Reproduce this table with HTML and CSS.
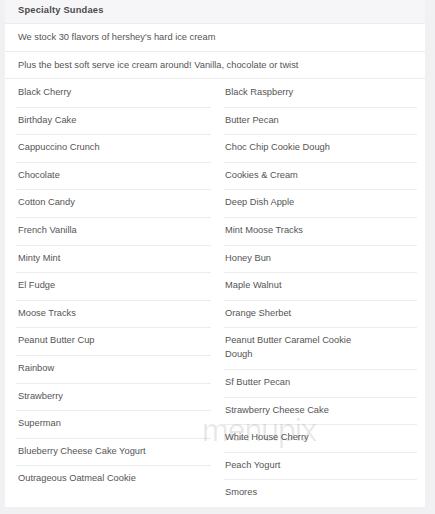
FILE: index.html
```html
<!DOCTYPE html>
<html>
<head>
<meta charset="utf-8">
<link rel="stylesheet" href="styles.css">
</head>
<body>
<div class="card">
  <div class="header">Specialty Sundaes</div>
  <div class="note">We stock 30 flavors of hershey's hard ice cream</div>
  <div class="note">Plus the best soft serve ice cream around! Vanilla, chocolate or twist</div>
  <div class="cols">
    <ul class="col">
      <li>Black Cherry</li>
      <li>Birthday Cake</li>
      <li>Cappuccino Crunch</li>
      <li>Chocolate</li>
      <li>Cotton Candy</li>
      <li>French Vanilla</li>
      <li>Minty Mint</li>
      <li>El Fudge</li>
      <li>Moose Tracks</li>
      <li>Peanut Butter Cup</li>
      <li>Rainbow</li>
      <li>Strawberry</li>
      <li>Superman</li>
      <li>Blueberry Cheese Cake Yogurt</li>
      <li>Outrageous Oatmeal Cookie</li>
    </ul>
    <ul class="col">
      <li>Black Raspberry</li>
      <li>Butter Pecan</li>
      <li>Choc Chip Cookie Dough</li>
      <li>Cookies &amp; Cream</li>
      <li>Deep Dish Apple</li>
      <li>Mint Moose Tracks</li>
      <li>Honey Bun</li>
      <li>Maple Walnut</li>
      <li>Orange Sherbet</li>
      <li>Peanut Butter Caramel Cookie Dough</li>
      <li>Sf Butter Pecan</li>
      <li>Strawberry Cheese Cake</li>
      <li>White House Cherry</li>
      <li>Peach Yogurt</li>
      <li>Smores</li>
    </ul>
  </div>
  <div class="watermark">menupix</div>
</div>
</body>
</html>
```
FILE: styles.css
```css
html, body {
  margin: 0;
  padding: 0;
  background: #f1f1f4;
}
body {
  font-family: "Liberation Sans", Arial, sans-serif;
  font-size: 9.3px;
  color: #555;
}
.card {
  position: relative;
  width: 420px;
  margin-left: 5px;
  background: #fff;
  overflow: hidden;
}
.header {
  background: #f6f6f9;
  height: 24px;
  line-height: 20px;
  padding-left: 13px;
  font-weight: bold;
  color: #4a4a4a;
  letter-spacing: 0.2px;
  border-bottom: 1px solid #ececef;
  box-sizing: border-box;
}
.note {
  height: 27.5px;
  box-sizing: border-box;
  line-height: 26px;
  padding-left: 13px;
  border-bottom: 1px solid #ececef;
}
.cols {
  display: grid;
  grid-template-columns: 195px 193px;
  column-gap: 13px;
  padding-left: 11px;
  padding-top: 1px;
}
.col {
  list-style: none;
  margin: 0;
  padding: 0;
}
.col li {
  padding: 5px 50px 7.6px 2px;
  line-height: 14px;
  border-bottom: 1px solid #ececef;
}
.col:last-child li {
  padding-left: 1px;
}
.col li:last-child {
  border-bottom: none;
}
.watermark {
  position: absolute;
  left: 197px;
  top: 412px;
  font-size: 32px;
  letter-spacing: -1px;
  color: rgba(0, 0, 0, 0.09);
  pointer-events: none;
}
```
